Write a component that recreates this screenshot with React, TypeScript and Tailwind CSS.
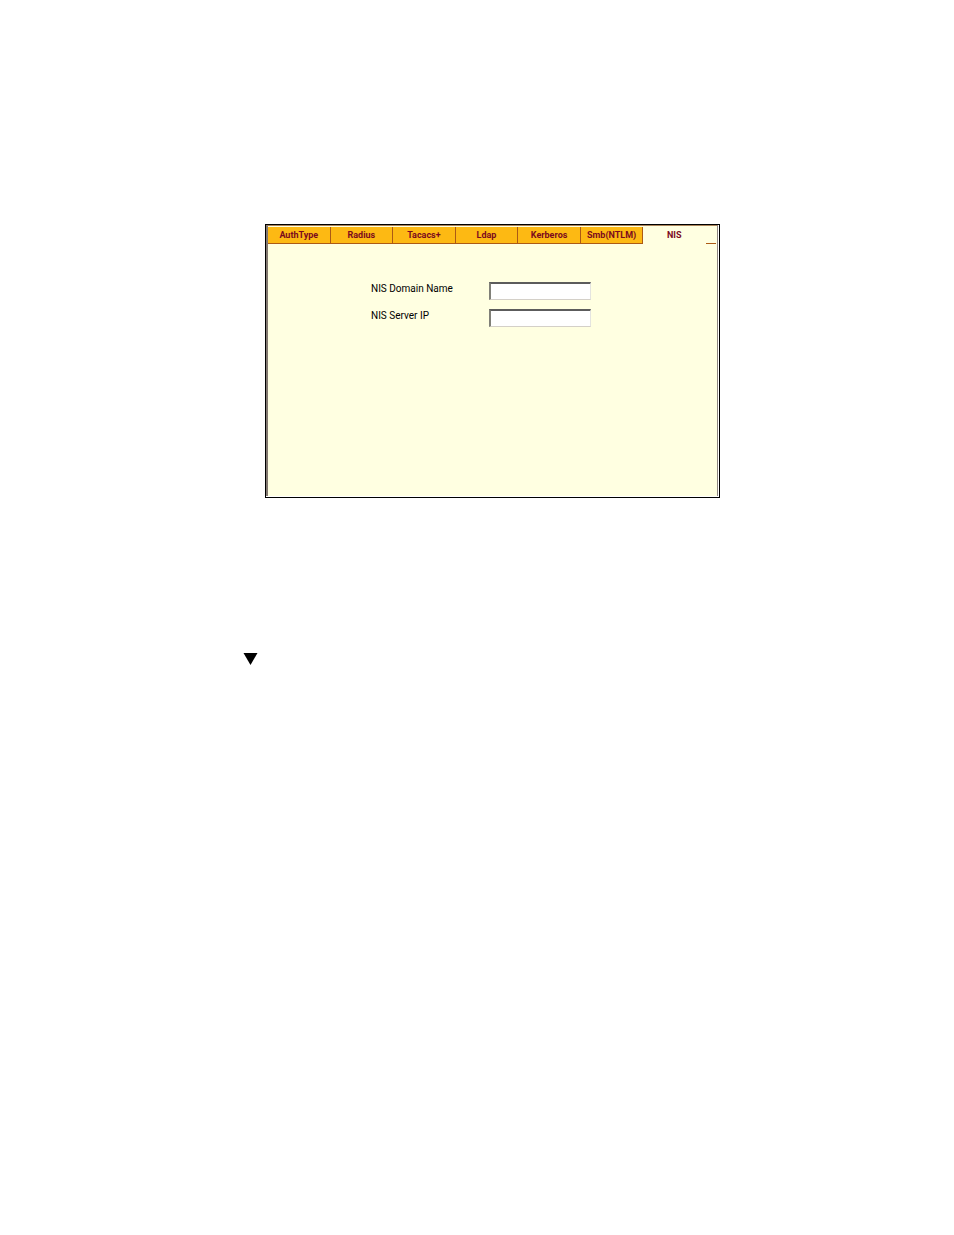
import React, { useState } from 'react';

const tabs = ['AuthType', 'Radius', 'Tacacs+', 'Ldap', 'Kerberos', 'Smb(NTLM)', 'NIS'];

const fields = [
  { id: 'nis-domain', label: 'NIS Domain Name' },
  { id: 'nis-server', label: 'NIS Server IP' },
];

const App: React.FC = () => {
  const [active, setActive] = useState('NIS');

  return (
    <main className="min-h-screen bg-white pt-56 pl-[243px] pr-[234px] font-[Roboto,'Liberation_Sans',sans-serif] text-black">
      <section className="ml-[22px] border border-black bg-white pr-px pb-px">
        <div className="h-[271px] bg-[#ffffe1] border-t border-l-2 border-r border-t-[#a98258] border-l-[#827870] border-r-[#8c8480] pt-px pr-px">
          {/* Tab bar */}
          <div className="flex h-[17px]" role="tablist">
            <div className="grid flex-1 grid-cols-7">
              {tabs.map((tab) => (
                <button
                  key={tab}
                  role="tab"
                  aria-selected={active === tab}
                  onClick={() => setActive(tab)}
                  className={`border-r border-b text-[9px] leading-4 font-bold text-[#7b0a1e] ${active === tab ? 'border-[#ffffe1] bg-[#ffffe1]' : 'border-[#ac5a14] bg-[#fdb913]'}`}
                >
                  {tab}
                </button>
              ))}
            </div>
            <div className="w-[10px] border-b border-[#ac5a14]" />
          </div>

          {/* Fields */}
          <form className="flex flex-col gap-[9px] pt-[38px] pl-[103px]">
            {fields.map((field) => (
              <div key={field.id} className="flex items-start">
                <label htmlFor={field.id} className="w-[118px] text-[10px] leading-[14px]">
                  {field.label}
                </label>
                <input
                  id={field.id}
                  type="text"
                  className="h-[18px] w-[102px] border-t-2 border-l-2 border-r border-b border-t-[#5c5c5c] border-l-[#808078] border-r-[#e4e4e0] border-b-[#d4d0c8] bg-white px-1 text-[10px] outline-none"
                />
              </div>
            ))}
          </form>
        </div>
      </section>

      <svg className="mt-[155px] h-3 w-[15px]" viewBox="0 0 15 12" aria-hidden="true">
        <path d="M.5 0h14l-7 12z" fill="#000" />
      </svg>
    </main>
  );
};

export default App;
